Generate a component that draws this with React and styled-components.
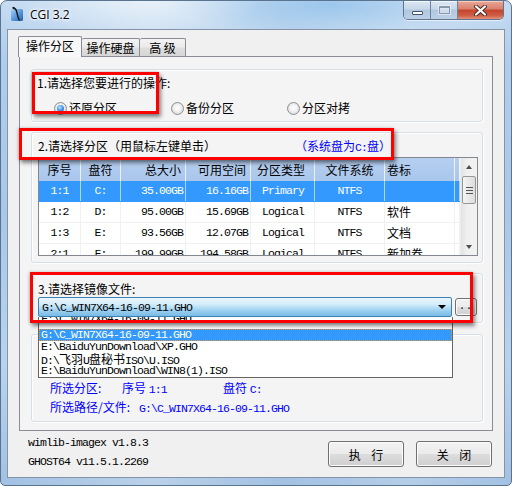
import React from 'react';
import styled, { createGlobalStyle, css } from 'styled-components';

const CJK = `"Noto Sans CJK SC", "Noto Sans", sans-serif`;
const MONO = `"Liberation Mono", "Noto Sans CJK SC", monospace`;

const GlobalStyle = createGlobalStyle`
  html, body { margin: 0; padding: 0; background: #ffffff; }
  body { font-family: ${CJK}; font-size: 12px; color: #000; }
  * { box-sizing: border-box; }
`;

const Window = styled.div`
  position: relative;
  width: 512px;
  height: 486px;
  border: 1px solid #5a7490;
  border-radius: 7px 7px 5px 5px;
  display: flex;
  flex-direction: column;
  overflow: hidden;
  background:
    radial-gradient(ellipse 120px 40px at 140px 0px, rgba(255,255,255,0.45), transparent),
    radial-gradient(ellipse 160px 30px at 330px 4px, rgba(120,180,232,0.55), transparent),
    linear-gradient(90deg, rgba(255,255,255,0) 0%, rgba(255,255,255,0.25) 30%, rgba(255,255,255,0) 55%, rgba(255,255,255,0.2) 80%, rgba(255,255,255,0) 100%),
    linear-gradient(180deg, #c6dcf1 0%, #afcdec 12%, #a9c8e8 45%, #b8d3ed 75%, #a2c1e2 100%);
`;

const TitleBar = styled.div`
  height: 28px;
  flex-shrink: 0;
  display: flex;
  align-items: flex-start;
`;

const AppIcon = styled.svg`
  width: 16px;
  height: 16px;
  margin: 5px 0 0 8px;
  flex-shrink: 0;
`;

const Title = styled.div`
  margin: 6px 0 0 5px;
  font-family: "Open Sans", "Noto Sans", sans-serif;
  font-size: 12px;
  line-height: 16px;
  color: #000;
  text-shadow: 0 0 5px #fff, 0 0 3px #fff, 0 0 2px #fff;
`;

const Controls = styled.div`
  margin-left: auto;
  margin-right: 7px;
  display: flex;
  height: 19px;
  border: 1px solid #5d7590;
  border-top: none;
  border-radius: 0 0 5px 5px;
  overflow: hidden;
  box-shadow: 0 1px 0 rgba(255,255,255,0.6);
`;

const CtrlButton = styled.div`
  width: ${p => p.$w}px;
  height: 100%;
  display: flex;
  align-items: center;
  justify-content: center;
  border-right: 1px solid #6e84a0;
  background: linear-gradient(180deg, #dbe7f3 0%, #c7d8ea 45%, #b1c7de 50%, #bcd1e6 100%);
  box-shadow: inset 0 1px 0 rgba(255,255,255,0.7);
  ${p => p.$close && css`
    border-right: none;
    background: linear-gradient(180deg, #e9a898 0%, #d9806c 45%, #c5432b 50%, #cf5d45 80%, #e3917b 100%);
    box-shadow: inset 0 1px 0 rgba(255,220,210,0.7);
  `}
`;

const MinGlyph = styled.span`
  width: 11px;
  height: 4px;
  margin-top: 6px;
  background: #fff;
  border: 1px solid #42546a;
  border-radius: 1px;
`;

const MaxGlyph = styled.span`
  width: 11px;
  height: 8px;
  border: 1px solid #8798ae;
  border-top-width: 2px;
  background: rgba(255,255,255,0.35);
  box-shadow: 0 0 0 1px rgba(255,255,255,0.5);
`;

const Client = styled.div`
  flex: 1;
  margin: 0 6px 7px 6px;
  border: 1px solid #8494a8;
  background: #f0f0f0;
  display: flex;
  flex-direction: column;
  padding: 6px 12px 0 10px;
`;

const TabRow = styled.div`
  height: 20px;
  display: flex;
  align-items: flex-end;
  flex-shrink: 0;
`;

const Tab = styled.div`
  width: ${p => p.$w}px;
  height: 18px;
  border: 1px solid #898c95;
  border-bottom: none;
  border-left-width: ${p => (p.$first ? 1 : 0)}px;
  border-radius: 2px 2px 0 0;
  background: linear-gradient(180deg, #f3f3f3 0%, #ebebeb 45%, #dedede 55%, #d6d6d6 100%);
  display: flex;
  align-items: center;
  justify-content: center;
  font-size: 12px;
  line-height: 14px;
  white-space: pre;
  ${p => p.$active && css`
    position: relative;
    z-index: 1;
    height: 21px;
    margin-bottom: -1px;
    border-left-width: 1px;
    border-right-width: 1px;
    background: #f7f7f7;
    padding-bottom: 2px;
  `}
`;

const Panel = styled.div`
  margin-left: 1px;
  width: 474px;
  height: 375px;
  flex-shrink: 0;
  border: 1px solid #898c95;
  background: #f4f4f4;
  display: flex;
  flex-direction: column;
  padding: 12px 9px 0 11px;
`;

const Group = styled.div`
  flex-shrink: 0;
  border: 1px solid #d5dfe5;
  border-radius: 3px;
  box-shadow: inset 1px 1px 0 #fff, 1px 1px 0 #fff;
  margin-top: ${p => p.$mt || 0}px;
  padding: ${p => p.$pad};
  display: flex;
  flex-direction: column;
`;

const GroupTitle = styled.div`
  height: 14px;
  line-height: 14px;
  white-space: nowrap;
  display: flex;
`;

const TitleMain = styled.span`
  width: ${p => (p.$w ? `${p.$w}px` : 'auto')};
  flex-shrink: 0;
`;

const Blue = styled.span`
  color: #0000ff;
`;

const Lat = styled.span`
  font-family: ${MONO};
  font-size: 11.5px;
  letter-spacing: -0.9px;
`;

const RadioRow = styled.div`
  margin-top: 11px;
  height: 14px;
  padding-left: 17px;
  display: flex;
  align-items: center;
`;

const RadioItem = styled.label`
  width: ${p => p.$w}px;
  display: flex;
  align-items: center;
  line-height: 14px;
  white-space: nowrap;
`;

const RadioCircle = styled.span`
  width: 13px;
  height: 13px;
  border-radius: 50%;
  border: 1px solid #8e8f8f;
  background: radial-gradient(circle at 50% 45%, #ffffff 0%, #f2f2f2 40%, #d9d9d9 80%, #cbcbcb 100%);
  display: flex;
  align-items: center;
  justify-content: center;
  margin-right: 2px;
  flex-shrink: 0;
  &::after {
    content: '';
    width: 7px;
    height: 7px;
    border-radius: 50%;
    background: ${p => (p.$checked ? 'radial-gradient(circle at 40% 35%, #bfe3ff 0%, #4d9ee8 45%, #1b5cae 100%)' : 'transparent')};
  }
`;

const ListView = styled.div`
  margin-top: 4px;
  width: 440px;
  height: 99px;
  border: 1px solid #828790;
  background: #fff;
  display: flex;
  overflow: hidden;
`;

const GridArea = styled.div`
  flex: 1;
  overflow: hidden;
`;

const GRID = '42px 40px 65px 65px 64px 70px 70px 1fr';

const HeaderRow = styled.div`
  display: grid;
  grid-template-columns: ${GRID};
  height: 23px;
  background: linear-gradient(180deg, #b6cff0 0%, #a9c6ec 100%);
`;

const HeaderCell = styled.div`
  display: flex;
  align-items: center;
  justify-content: ${p => p.$align};
  padding: ${p => p.$pad || '0'};
  border-right: 1px solid rgba(255,255,255,0.75);
  line-height: 14px;
  white-space: nowrap;
`;

const Row = styled.div`
  display: grid;
  grid-template-columns: ${GRID};
  height: 21px;
  border-bottom: 1px solid #f0f0f0;
  ${p => p.$selected && css`
    background: #3399ff;
    color: #fff;
    border-bottom-color: #3399ff;
  `}
`;

const Cell = styled.div`
  display: flex;
  align-items: center;
  justify-content: ${p => p.$align};
  padding: ${p => p.$pad || '0'};
  border-right: 1px solid ${p => (p.$sel ? 'rgba(255,255,255,0.6)' : '#f0f0f0')};
  white-space: nowrap;
  overflow: hidden;
  line-height: 14px;
`;

const ScrollBar = styled.div`
  width: 17px;
  flex-shrink: 0;
  display: flex;
  flex-direction: column;
  background: linear-gradient(90deg, #e3e3e3 0%, #f0f0f0 40%, #f2f2f2 100%);
  border-left: 1px solid #ededed;
`;

const ScrollBtn = styled.div`
  height: 17px;
  display: flex;
  align-items: center;
  justify-content: center;
  &::after {
    content: '';
    border-left: 3.5px solid transparent;
    border-right: 3.5px solid transparent;
    ${p => (p.$down ? 'border-top: 4px solid #4d4d4d;' : 'border-bottom: 4px solid #4d4d4d;')}
  }
`;

const Thumb = styled.div`
  margin: 1px 1px 0 1px;
  height: 28px;
  border: 1px solid #979797;
  border-radius: 2px;
  background: linear-gradient(90deg, #f4f4f4 0%, #e9e9e9 50%, #dcdcdc 100%);
  display: flex;
  flex-direction: column;
  align-items: center;
  justify-content: center;
  gap: 2px;
`;

const Grip = styled.span`
  width: 7px;
  height: 1px;
  background: #555;
`;

const Spacer = styled.div`
  flex: 1;
`;

const ComboRow = styled.div`
  margin-top: 1px;
  display: flex;
  align-items: center;
  gap: 3px;
`;

const Combo = styled.div`
  width: 415px;
  height: 20px;
  border: 1px solid #3c7fb1;
  border-radius: 2px;
  background: linear-gradient(180deg, #eaf6fd 0%, #d4ecfa 35%, #b2dcf5 55%, #8fc8ec 80%, #79bbe6 100%);
  display: flex;
  align-items: center;
  padding-left: 3px;
  &::after {
    content: '';
    margin-left: auto;
    margin-right: 5px;
    border-left: 4px solid transparent;
    border-right: 4px solid transparent;
    border-top: 4px solid #000;
  }
`;

const SmallButton = styled.div`
  width: 22px;
  height: 18px;
  border: 1px solid #707070;
  border-radius: 3px;
  background: linear-gradient(180deg, #f2f2f2 0%, #ebebeb 50%, #dddddd 51%, #cfcfcf 100%);
  box-shadow: inset 0 0 0 1px #fcfcfc;
  display: flex;
  align-items: flex-end;
  justify-content: center;
  padding-bottom: 3px;
  font-family: ${MONO};
  font-size: 10px;
  line-height: 10px;
  letter-spacing: 1px;
`;

const InfoLine = styled.div`
  height: 14px;
  line-height: 14px;
  display: flex;
  white-space: nowrap;
  color: #0000ff;
  margin-top: ${p => p.$mt || 0}px;
`;

const InfoPart = styled.span`
  width: ${p => (p.$w ? `${p.$w}px` : 'auto')};
  flex-shrink: 0;
`;

const DropList = styled.div`
  position: absolute;
  left: 37px;
  top: 316px;
  width: 415px;
  height: 61px;
  background: #fff;
  border: 1px solid #646464;
  border-top: none;
  overflow: hidden;
  z-index: 3;
`;

const DropItem = styled.div`
  height: 12px;
  line-height: 12px;
  padding-left: 2px;
  white-space: nowrap;
  font-family: ${MONO};
  font-size: 11.5px;
  letter-spacing: -0.9px;
  ${p => p.$selected && css`
    background: #3399ff;
    color: #fff;
    outline: 1px dotted #e89a3c;
    outline-offset: -1px;
  `}
  ${p => p.$clipped && css`
    height: 17px;
    margin-top: -5px;
    line-height: 14px;
  `}
`;

const DropCJK = styled.span`
  font-family: ${CJK};
  font-size: 12px;
  letter-spacing: 0;
`;

const Footer = styled.div`
  flex: 1;
  display: flex;
  padding: 5px 0 0 10px;
`;

const Versions = styled.div`
  display: flex;
  flex-direction: column;
  gap: 5px;
`;

const VersionLine = styled.div`
  height: 14px;
  line-height: 14px;
  font-family: ${MONO};
  font-size: 11.5px;
  letter-spacing: -0.9px;
  white-space: nowrap;
`;

const Buttons = styled.div`
  margin-left: auto;
  margin-top: 5px;
  display: flex;
  gap: 12px;
  align-self: flex-start;
`;

const Button = styled.div`
  width: 76px;
  height: 26px;
  border: 1px solid #707070;
  border-radius: 3px;
  background: linear-gradient(180deg, #f2f2f2 0%, #ebebeb 50%, #dddddd 51%, #cfcfcf 100%);
  box-shadow: inset 0 0 0 1px #fcfcfc;
  display: flex;
  align-items: center;
  justify-content: center;
  font-size: 12px;
  letter-spacing: 4px;
  padding-left: 4px;
`;

const RedBox = styled.div`
  position: absolute;
  left: ${p => p.$x}px;
  top: ${p => p.$y}px;
  width: ${p => p.$w}px;
  height: ${p => p.$h}px;
  border: 3px solid #ff0000;
  box-shadow: 2px 3px 4px rgba(0,0,0,0.45), -1px 0 3px rgba(0,0,0,0.2);
  z-index: 5;
  pointer-events: none;
`;

const columns = [
  { key: 'no', label: '序号', ha: 'center', ca: 'center', mono: true },
  { key: 'drive', label: '盘符', ha: 'center', ca: 'center', mono: true },
  { key: 'size', label: '总大小', ha: 'flex-end', hp: '0 4px 0 0', ca: 'flex-end', cp: '0 2px 0 0', mono: true },
  { key: 'free', label: '可用空间', ha: 'flex-end', hp: '0 4px 0 0', ca: 'flex-end', cp: '0 2px 0 0', mono: true },
  { key: 'type', label: '分区类型', ha: 'flex-start', hp: '0 0 0 6px', ca: 'flex-start', cp: '0 0 0 11px', mono: true },
  { key: 'fs', label: '文件系统', ha: 'center', ca: 'center', mono: true },
  { key: 'label', label: '卷标', ha: 'flex-start', hp: '0 0 0 2px', ca: 'flex-start', cp: '0 0 0 2px' },
];

const rows = [
  { no: '1:1', drive: 'C:', size: '35.00GB', free: '16.16GB', type: 'Primary', fs: 'NTFS', label: '' },
  { no: '1:2', drive: 'D:', size: '95.00GB', free: '15.69GB', type: 'Logical', fs: 'NTFS', label: '软件' },
  { no: '1:3', drive: 'E:', size: '93.56GB', free: '12.07GB', type: 'Logical', fs: 'NTFS', label: '文档' },
  { no: '2:1', drive: 'F:', size: '199.99GB', free: '194.58GB', type: 'Logical', fs: 'NTFS', label: '新加卷' },
];

export default function App() {
  return (
    <>
      <GlobalStyle />
      <Window>
        <TitleBar>
          <AppIcon viewBox="0 0 16 16">
            <defs>
              <linearGradient id="ig" x1="0" y1="0" x2="1" y2="1">
                <stop offset="0" stopColor="#a9d0f5" />
                <stop offset="0.6" stopColor="#4f8fd6" />
                <stop offset="1" stopColor="#2a5fa8" />
              </linearGradient>
            </defs>
            <rect x="2" y="3" width="12" height="12" rx="1.5" fill="url(#ig)" />
            <path d="M4 1.5 C6 2, 7.5 4, 8 7 S 9 12, 10.5 14.5" stroke="#111" strokeWidth="1.4" fill="none" />
            <path d="M3.5 1.5 L5.5 3" stroke="#111" strokeWidth="1.2" />
          </AppIcon>
          <Title>CGI 3.2</Title>
          <Controls>
            <CtrlButton $w={27}><MinGlyph /></CtrlButton>
            <CtrlButton $w={27}><MaxGlyph /></CtrlButton>
            <CtrlButton $w={45} $close>
              <svg width="13" height="11" viewBox="0 0 13 11">
                <path d="M2 1.5 L11 9.5 M11 1.5 L2 9.5" stroke="#4a2a24" strokeWidth="4" strokeLinecap="round" />
                <path d="M2 1.5 L11 9.5 M11 1.5 L2 9.5" stroke="#ffffff" strokeWidth="2.2" strokeLinecap="round" />
              </svg>
            </CtrlButton>
          </Controls>
        </TitleBar>

        <Client>
          <TabRow>
            <Tab $w={64} $first $active>操作分区</Tab>
            <Tab $w={58}>操作硬盘</Tab>
            <Tab $w={46}>{'高 级'}</Tab>
          </TabRow>
          <Panel>
            <Group $pad="6px 5px">
              <GroupTitle>1.请选择您要进行的操作:</GroupTitle>
              <RadioRow>
                <RadioItem $w={117}><RadioCircle $checked />还原分区</RadioItem>
                <RadioItem $w={116}><RadioCircle />备份分区</RadioItem>
                <RadioItem $w={120}><RadioCircle />分区对拷</RadioItem>
              </RadioRow>
            </Group>

            <Group $mt={10} $pad="6px 4px 6px 6px">
              <GroupTitle>
                <TitleMain $w={257}>2.请选择分区（用鼠标左键单击）</TitleMain>
                <Blue>（系统盘为<Lat>C:</Lat>盘）</Blue>
              </GroupTitle>
              <ListView>
                <GridArea>
                  <HeaderRow>
                    {columns.map(c => (
                      <HeaderCell key={c.key} $align={c.ha} $pad={c.hp}>{c.label}</HeaderCell>
                    ))}
                    <HeaderCell $align="flex-start" />
                  </HeaderRow>
                  {rows.map((r, i) => (
                    <Row key={r.no} $selected={i === 0}>
                      {columns.map(c => (
                        <Cell key={c.key} $align={c.ca} $pad={c.cp} $sel={i === 0}>
                          {c.mono ? <Lat>{r[c.key]}</Lat> : r[c.key]}
                        </Cell>
                      ))}
                      <Cell $align="flex-start" $sel={i === 0} />
                    </Row>
                  ))}
                </GridArea>
                <ScrollBar>
                  <ScrollBtn />
                  <Thumb><Grip /><Grip /><Grip /></Thumb>
                  <Spacer />
                  <ScrollBtn $down />
                </ScrollBar>
              </ListView>
            </Group>

            <Group $mt={10} $pad="8px 5px 5px 6px">
              <GroupTitle>3.请选择镜像文件:</GroupTitle>
              <ComboRow>
                <Combo><Lat>G:\C_WIN7X64-16-09-11.GHO</Lat></Combo>
                <SmallButton>..</SmallButton>
              </ComboRow>
            </Group>

            <Group $mt={11} $pad="46px 6px 7px 18px">
              <InfoLine>
                <InfoPart $w={72}>所选分区:</InfoPart>
                <InfoPart $w={101}>序号 <Lat>1:1</Lat></InfoPart>
                <InfoPart>盘符 <Lat>C:</Lat></InfoPart>
              </InfoLine>
              <InfoLine $mt={5}>
                <InfoPart $w={89}>所选路径/文件:</InfoPart>
                <InfoPart><Lat>G:\C_WIN7X64-16-09-11.GHO</Lat></InfoPart>
              </InfoLine>
            </Group>
          </Panel>

          <Footer>
            <Versions>
              <VersionLine>wimlib-imagex v1.8.3</VersionLine>
              <VersionLine>GHOST64 v11.5.1.2269</VersionLine>
            </Versions>
            <Buttons>
              <Button>执 行</Button>
              <Button>关 闭</Button>
            </Buttons>
          </Footer>
        </Client>

        <DropList>
          <DropItem $clipped>F:\C_WIN7X64-16-09-11.GHO</DropItem>
          <DropItem $selected>G:\C_WIN7X64-16-09-11.GHO</DropItem>
          <DropItem>E:\BaiduYunDownload\XP.GHO</DropItem>
          <DropItem>D:\<DropCJK>飞羽</DropCJK>U<DropCJK>盘秘书</DropCJK>ISO\U.ISO</DropItem>
          <DropItem>E:\BaiduYunDownload\WIN8(1).ISO</DropItem>
        </DropList>

        <RedBox $x={31} $y={71} $w={127} $h={42} />
        <RedBox $x={18} $y={127} $w={375} $h={32} />
        <RedBox $x={29} $y={271} $w={443} $h={51} />
      </Window>
    </>
  );
}
